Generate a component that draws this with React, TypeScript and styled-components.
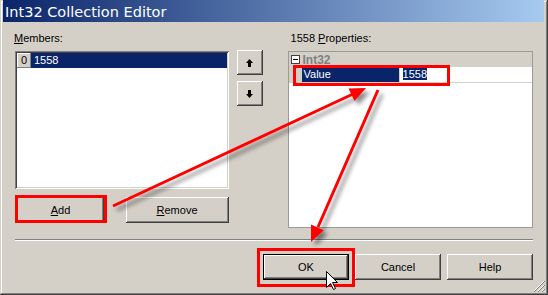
import styled, { createGlobalStyle, css } from 'styled-components';

const GlobalStyle = createGlobalStyle`
  body {
    margin: 0;
    font-family: "Liberation Sans", Arial, sans-serif;
    font-size: 11px;
    color: #000;
  }
`;

const raised = css`
  background: #d4d0c8;
  box-shadow:
    inset -1px -1px #404040,
    inset 1px 1px #ffffff,
    inset -2px -2px #808080,
    inset 2px 2px #d4d0c8;
`;

const sunken = css`
  box-shadow:
    inset 1px 1px #808080,
    inset -1px -1px #ffffff,
    inset 2px 2px #404040,
    inset -2px -2px #d4d0c8;
`;

const UpArrow = () => (
  <svg width="7" height="8" viewBox="0 0 7 8">
    <polygon points="3.5,0 7,4 5,4 5,8 2,8 2,4 0,4" fill="#000" />
  </svg>
);

const DownArrow = () => (
  <svg width="7" height="8" viewBox="0 0 7 8">
    <polygon points="3.5,8 7,4 5,4 5,0 2,0 2,4 0,4" fill="#000" />
  </svg>
);

const Annotations = () => (
  <Overlay width="548" height="295" viewBox="0 0 548 295">
    <defs>
      <filter id="shade" x="-20%" y="-20%" width="140%" height="140%">
        <feDropShadow dx="4" dy="4" stdDeviation="2" floodColor="#000" floodOpacity="0.45" />
      </filter>
    </defs>
    <g fill="none" stroke="#ff0000" strokeWidth="3">
      <rect x="16.5" y="196.5" width="89" height="25" />
      <rect x="294.5" y="66.5" width="154" height="18" />
      <rect x="258.5" y="249.5" width="95" height="36" />
    </g>
    <g filter="url(#shade)">
      <line x1="113" y1="206" x2="353" y2="94" stroke="#ff0000" strokeWidth="3" />
      <polygon points="366,88 354.5,101.1 348.5,88.5" fill="#ff0000" />
      <line x1="378" y1="90" x2="318" y2="227" stroke="#ff0000" strokeWidth="3" />
      <polygon points="311,242 323.8,230.2 311,224.6" fill="#ff0000" />
    </g>
    <path
      d="M326.5 271.5 L326.5 287.5 L330.5 283.5 L333.5 289.5 L335.5 288.5 L332.5 282.5 L337.5 282.5 Z"
      fill="#fff"
      stroke="#000"
      strokeWidth="1"
    />
  </Overlay>
);

export default function App() {
  return (
    <>
      <GlobalStyle />
      <Window>
        <TitleBar>Int32 Collection Editor</TitleBar>
        <Body>
          <TopRow>
            <Pane $width={214}>
              <FieldLabel $indent={-1}>
                <u>M</u>embers:
              </FieldLabel>
              <ListBox>
                <ListRow>
                  <IndexCell>0</IndexCell>
                  <ItemCell>1558</ItemCell>
                </ListRow>
              </ListBox>
              <ListButtons>
                <Button $width={87} $offset={2}>
                  <u>A</u>dd
                </Button>
                <Button $width={103}>
                  <u>R</u>emove
                </Button>
              </ListButtons>
            </Pane>
            <MoverColumn>
              <MoverButton>
                <UpArrow />
              </MoverButton>
              <MoverButton>
                <DownArrow />
              </MoverButton>
            </MoverColumn>
            <Pane $width={246} $gap={25}>
              <FieldLabel $indent={3}>
                1558 <u>P</u>roperties:
              </FieldLabel>
              <PropertyGrid>
                <CategoryRow>
                  <ExpandBox>
                    <svg width="9" height="9" viewBox="0 0 9 9">
                      <rect x="0.5" y="0.5" width="8" height="8" fill="#fff" stroke="#404040" />
                      <line x1="2" y1="4.5" x2="7" y2="4.5" stroke="#000" />
                    </svg>
                  </ExpandBox>
                  <CategoryName>Int32</CategoryName>
                </CategoryRow>
                <PropertyRow>
                  <Gutter />
                  <NameCell>Value</NameCell>
                  <ValueCell>
                    <SelectedText>1558</SelectedText>
                  </ValueCell>
                </PropertyRow>
              </PropertyGrid>
            </Pane>
          </TopRow>
          <Separator />
          <DialogButtons>
            <Button $width={86} $default>
              OK
            </Button>
            <Button $width={86}>Cancel</Button>
            <Button $width={86}>Help</Button>
          </DialogButtons>
        </Body>
        <Grip width="12" height="12" viewBox="0 0 12 12">
          <g strokeWidth="1">
            <line x1="11" y1="1" x2="1" y2="11" stroke="#fff" />
            <line x1="12" y1="1" x2="1" y2="12" stroke="#808080" />
            <line x1="11" y1="5" x2="5" y2="11" stroke="#fff" />
            <line x1="12" y1="5" x2="5" y2="12" stroke="#808080" />
            <line x1="11" y1="9" x2="9" y2="11" stroke="#fff" />
            <line x1="12" y1="9" x2="9" y2="12" stroke="#808080" />
          </g>
        </Grip>
        <Annotations />
      </Window>
    </>
  );
}

const Window = styled.div`
  position: relative;
  box-sizing: border-box;
  width: 548px;
  height: 295px;
  padding: 0 4px 3px 3px;
  display: flex;
  flex-direction: column;
  overflow: hidden;
  background: #d4d0c8;
  box-shadow:
    inset -1px -1px #404040,
    inset 1px 1px #d4d0c8,
    inset -2px -2px #808080,
    inset 2px 2px #ffffff;
`;

const TitleBar = styled.div`
  height: 22px;
  box-sizing: border-box;
  padding: 2px 0 0 2px;
  line-height: 20px;
  font-family: "DejaVu Sans", Verdana, sans-serif;
  font-size: 14.5px;
  color: #fff;
  white-space: nowrap;
  background: linear-gradient(to right, #0a246a, #a6caf0);
`;

const Body = styled.div`
  flex: 1;
  display: flex;
  flex-direction: column;
  padding: 10px 11px 0 12px;
`;

const TopRow = styled.div`
  display: flex;
  align-items: flex-start;
`;

const Pane = styled.div<{ $width: number; $gap?: number }>`
  width: ${({ $width }) => $width}px;
  margin-left: ${({ $gap = 0 }) => $gap}px;
  display: flex;
  flex-direction: column;
`;

const FieldLabel = styled.div<{ $indent: number }>`
  height: 13px;
  line-height: 13px;
  margin: 0 0 6px ${({ $indent }) => $indent}px;
  white-space: nowrap;
`;

const ListBox = styled.div`
  height: 138px;
  box-sizing: border-box;
  padding: 2px;
  background: #fff;
  ${sunken}
`;

const ListRow = styled.div`
  display: flex;
  height: 15px;
  line-height: 15px;
`;

const IndexCell = styled.div`
  width: 14px;
  text-align: center;
  ${raised}
  box-shadow:
    inset -1px -1px #808080,
    inset 1px 1px #ffffff;
`;

const ItemCell = styled.div`
  flex: 1;
  padding-left: 3px;
  background: #0a246a;
  color: #fff;
`;

const ListButtons = styled.div`
  display: flex;
  justify-content: space-between;
  margin-top: 8px;
`;

const Button = styled.div<{ $width: number; $offset?: number; $default?: boolean }>`
  box-sizing: border-box;
  width: ${({ $width }) => $width}px;
  height: 26px;
  margin-left: ${({ $offset = 0 }) => $offset}px;
  display: flex;
  align-items: center;
  justify-content: center;
  ${raised}
  ${({ $default }) =>
    $default &&
    css`
      border: 1px solid #000;
    `}
`;

const MoverColumn = styled.div`
  margin-left: 8px;
  padding-top: 18px;
  display: flex;
  flex-direction: column;
  gap: 6px;
`;

const MoverButton = styled.div`
  width: 26px;
  height: 25px;
  display: flex;
  align-items: center;
  justify-content: center;
  ${raised}
`;

const PropertyGrid = styled.div`
  height: 177px;
  box-sizing: border-box;
  border: 1px solid #9c9a94;
  background: #fff;
`;

const CategoryRow = styled.div`
  display: flex;
  align-items: center;
  height: 15px;
  background: #d4d0c8;
`;

const ExpandBox = styled.div`
  width: 14px;
  display: flex;
  padding-left: 2px;
  box-sizing: border-box;
`;

const CategoryName = styled.div`
  font-weight: bold;
  color: #808080;
  font-size: 12px;
`;

const PropertyRow = styled.div`
  display: flex;
  height: 16px;
  line-height: 15px;
  border-bottom: 1px solid #d4d0c8;
  box-sizing: border-box;
`;

const Gutter = styled.div`
  width: 13px;
  background: #d4d0c8;
`;

const NameCell = styled.div`
  width: 98px;
  padding-left: 2px;
  box-sizing: border-box;
  background: #0a246a;
  color: #fff;
  border-right: 1px solid #d4d0c8;
`;

const ValueCell = styled.div`
  flex: 1;
  padding-left: 3px;
`;

const SelectedText = styled.span`
  background: #0a246a;
  color: #fff;
`;

const Separator = styled.div`
  margin-top: 11px;
  border-top: 1px solid #808080;
  border-bottom: 1px solid #fff;
`;

const DialogButtons = styled.div`
  margin-top: 13px;
  display: flex;
  justify-content: flex-end;
  gap: 6px;
`;

const Grip = styled.svg`
  position: absolute;
  right: 3px;
  bottom: 3px;
`;

const Overlay = styled.svg`
  position: absolute;
  left: 0;
  top: 0;
  pointer-events: none;
`;
